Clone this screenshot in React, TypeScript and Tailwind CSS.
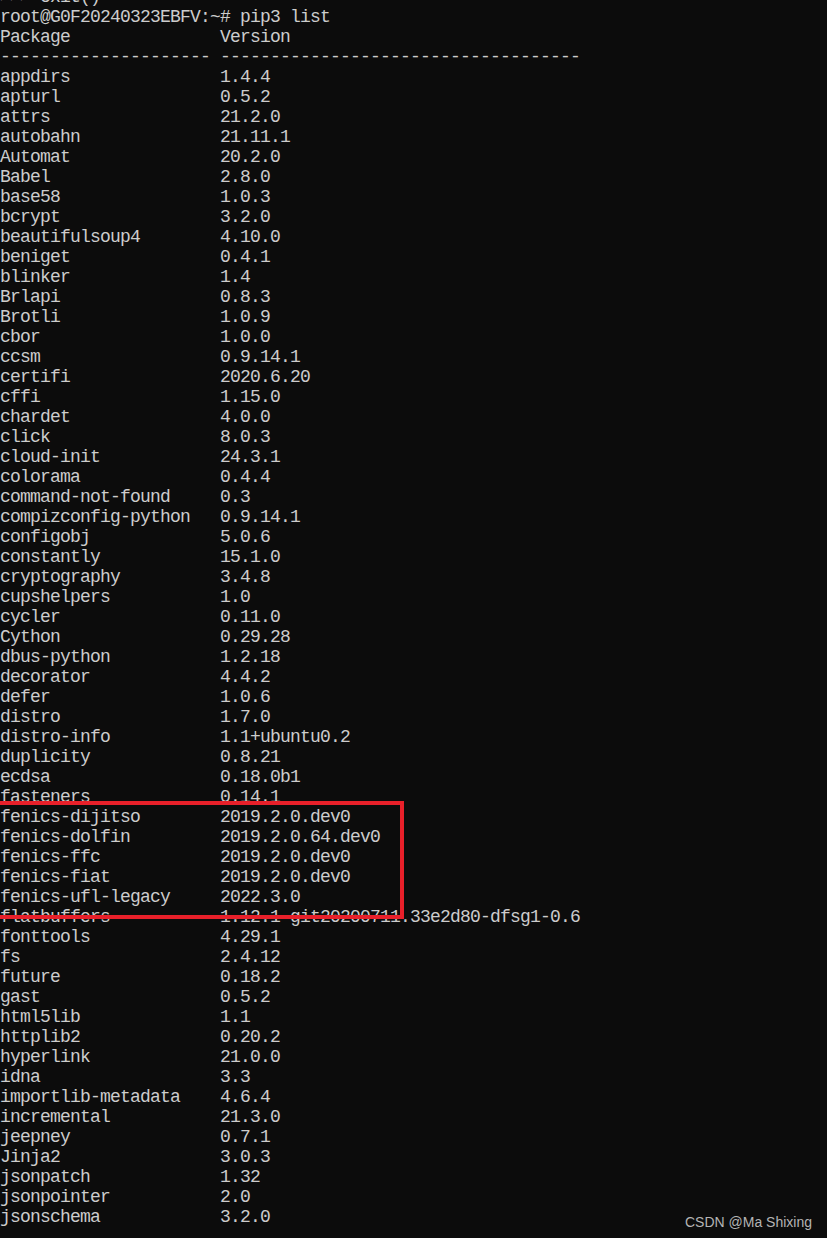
import React from "react";

const pkgs: [string, string][] = [
  ["appdirs", "1.4.4"],
  ["apturl", "0.5.2"],
  ["attrs", "21.2.0"],
  ["autobahn", "21.11.1"],
  ["Automat", "20.2.0"],
  ["Babel", "2.8.0"],
  ["base58", "1.0.3"],
  ["bcrypt", "3.2.0"],
  ["beautifulsoup4", "4.10.0"],
  ["beniget", "0.4.1"],
  ["blinker", "1.4"],
  ["Brlapi", "0.8.3"],
  ["Brotli", "1.0.9"],
  ["cbor", "1.0.0"],
  ["ccsm", "0.9.14.1"],
  ["certifi", "2020.6.20"],
  ["cffi", "1.15.0"],
  ["chardet", "4.0.0"],
  ["click", "8.0.3"],
  ["cloud-init", "24.3.1"],
  ["colorama", "0.4.4"],
  ["command-not-found", "0.3"],
  ["compizconfig-python", "0.9.14.1"],
  ["configobj", "5.0.6"],
  ["constantly", "15.1.0"],
  ["cryptography", "3.4.8"],
  ["cupshelpers", "1.0"],
  ["cycler", "0.11.0"],
  ["Cython", "0.29.28"],
  ["dbus-python", "1.2.18"],
  ["decorator", "4.4.2"],
  ["defer", "1.0.6"],
  ["distro", "1.7.0"],
  ["distro-info", "1.1+ubuntu0.2"],
  ["duplicity", "0.8.21"],
  ["ecdsa", "0.18.0b1"],
  ["fasteners", "0.14.1"],
  ["fenics-dijitso", "2019.2.0.dev0"],
  ["fenics-dolfin", "2019.2.0.64.dev0"],
  ["fenics-ffc", "2019.2.0.dev0"],
  ["fenics-fiat", "2019.2.0.dev0"],
  ["fenics-ufl-legacy", "2022.3.0"],
  ["flatbuffers", "1.12.1-git20200711.33e2d80-dfsg1-0.6"],
  ["fonttools", "4.29.1"],
  ["fs", "2.4.12"],
  ["future", "0.18.2"],
  ["gast", "0.5.2"],
  ["html5lib", "1.1"],
  ["httplib2", "0.20.2"],
  ["hyperlink", "21.0.0"],
  ["idna", "3.3"],
  ["importlib-metadata", "4.6.4"],
  ["incremental", "21.3.0"],
  ["jeepney", "0.7.1"],
  ["Jinja2", "3.0.3"],
  ["jsonpatch", "1.32"],
  ["jsonpointer", "2.0"],
  ["jsonschema", "3.2.0"],
];

function Row({ a, b }: { a: string; b: string }) {
  return (
    <div className="flex h-[20px] items-center whitespace-pre">
      <span className="w-[220px] shrink-0">{a}</span>
      <span>{b}</span>
    </div>
  );
}

export default function App() {
  return (
    <div className="relative h-[1238px] w-[827px] overflow-hidden bg-[#0c0c0c] text-[#cccccc]">
      <div className="mt-[-13px] font-['Liberation_Mono',monospace] text-[18px] leading-[20px] tracking-[-0.8px]">
        <div className="flex h-[20px] items-center whitespace-pre">{">>> exit()"}</div>
        <div className="flex h-[20px] items-center whitespace-pre">root@G0F20240323EBFV:~# pip3 list</div>
        <Row a="Package" b="Version" />
        <Row a="---------------------" b="------------------------------------" />
        {pkgs.map(([a, b]) => (
          <Row key={a} a={a} b={b} />
        ))}
      </div>
      <div className="pointer-events-none absolute left-[-10px] top-[801px] h-[118px] w-[414px] border-4 border-[#e8202a]" />
      <div className="absolute right-[15px] top-[1213px] font-['Liberation_Sans',sans-serif] text-[14px] leading-[18px] text-[#b4b4b4]">
        CSDN @Ma Shixing
      </div>
    </div>
  );
}
